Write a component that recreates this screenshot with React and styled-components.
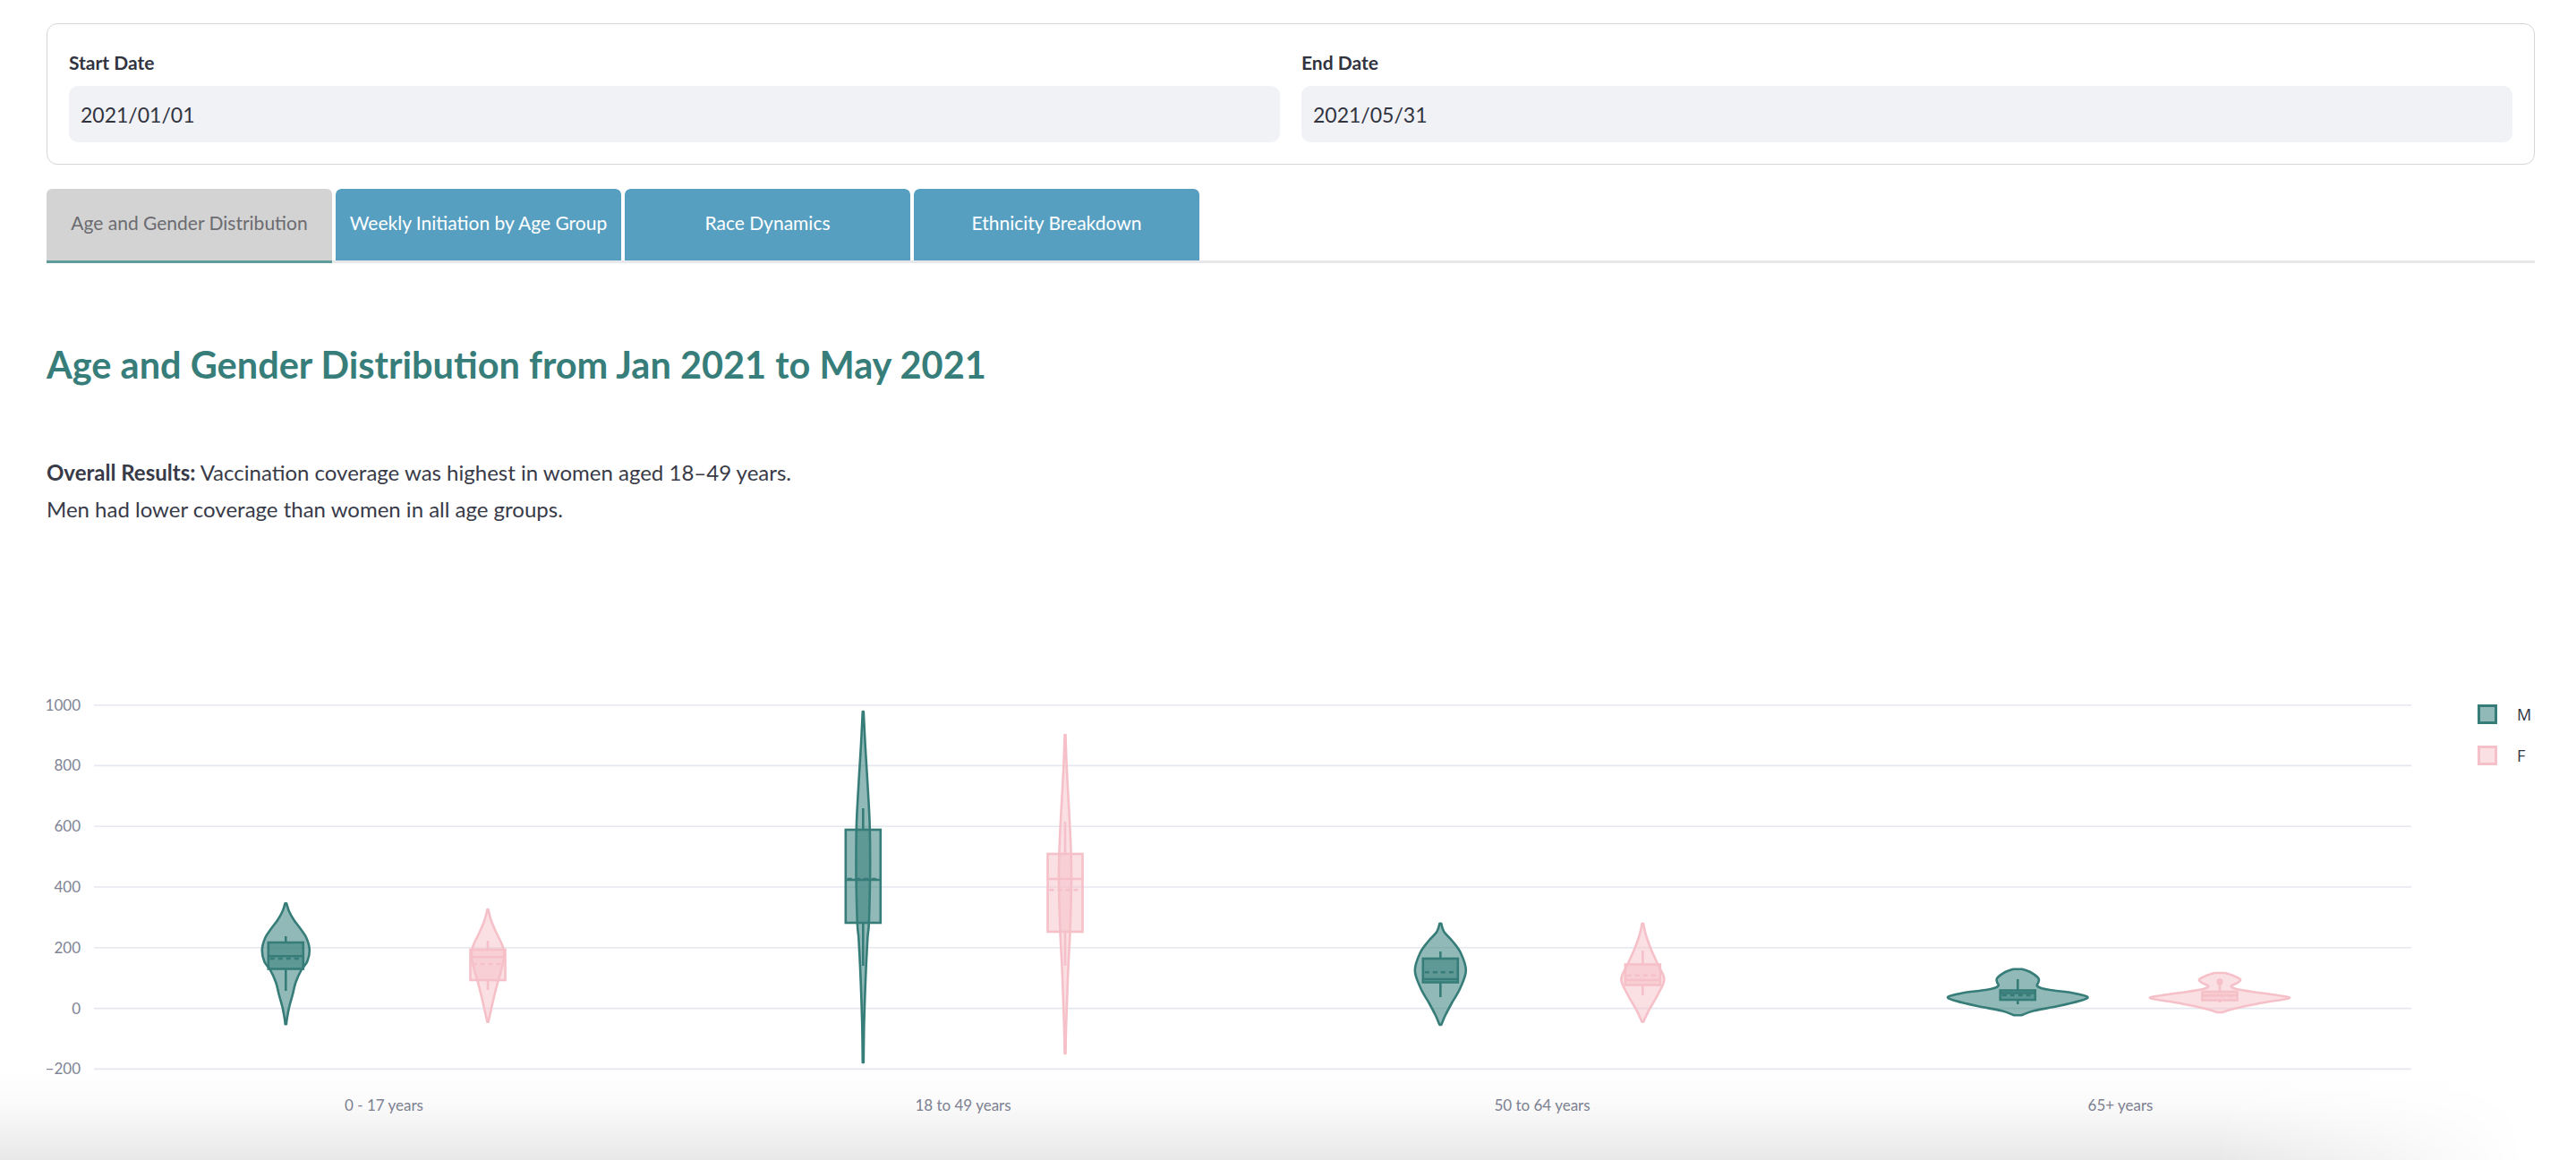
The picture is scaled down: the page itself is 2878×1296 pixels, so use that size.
import React from "react";
import styled, { createGlobalStyle } from "styled-components";

const GlobalStyle = createGlobalStyle`
  html, body { margin: 0; padding: 0; background: #ffffff; overflow: hidden; }
  body { font-family: "Source Sans Pro", Lato, "Noto Sans", sans-serif; color: #31333f; }
  * { box-sizing: border-box; }
`;

const Page = styled.main`
  padding: 26px 46px 0 52px;
`;

const Card = styled.section`
  border: 1px solid #d6d6d9;
  border-radius: 12px;
  padding: 24px;
  display: grid;
  grid-template-columns: 1fr 1fr;
  gap: 24px;
`;

const Field = styled.div`
  display: flex;
  flex-direction: column;
`;

const FieldLabel = styled.label`
  font-size: 21px;
  font-weight: 700;
  line-height: 38px;
  margin-bottom: 7px;
  color: #31333f;
`;

const DateInput = styled.div`
  height: 63px;
  background: #f0f2f6;
  border-radius: 10px;
  padding: 0 13px;
  display: flex;
  align-items: center;
  font-size: 23px;
  color: #31333f;
`;

const TabList = styled.div`
  margin-top: 27px;
  display: flex;
  gap: 4px;
  border-bottom: 3px solid #e8e8ea;
`;

const Tab = styled.button`
  width: 319px;
  height: 83px;
  margin-bottom: -3px;
  border: none;
  border-bottom: 3px solid ${(p) => (p.$active ? "#5f9c99" : "transparent")};
  background-clip: padding-box;
  background-color: ${(p) => (p.$active ? "#d3d3d3" : "#579fc1")};
  color: ${(p) => (p.$active ? "#6b6b70" : "#ffffff")};
  border-radius: 6px 6px 0 0;
  font-family: inherit;
  font-size: 21px;
  font-weight: 400;
  display: flex;
  align-items: center;
  justify-content: center;
  padding: 0 0 5px;
`;

const Title = styled.h3`
  margin: 88px 0 0;
  font-size: 41.5px;
  line-height: 50px;
  font-weight: 700;
  color: #377e7b;
`;

const Summary = styled.p`
  margin: 75px 0 0;
  font-size: 24px;
  line-height: 41px;
  color: #383a48;
`;

const Strong = styled.strong`
  font-weight: 700;
`;

const ChartFrame = styled.div`
  margin-top: 12px;
  width: 2780px;
`;

const ChartSvg = styled.svg`
  display: block;
`;

const BottomFade = styled.div`
  position: fixed;
  left: 0;
  right: 0;
  bottom: 0;
  height: 100px;
  pointer-events: none;
  background: linear-gradient(
    to bottom,
    rgba(0, 0, 0, 0) 0%,
    rgba(0, 0, 0, 0.015) 35%,
    rgba(0, 0, 0, 0.09) 100%
  );
  -webkit-mask-image: linear-gradient(to right, #000 0%, #000 86%, transparent 98%);
  mask-image: linear-gradient(to right, #000 0%, #000 86%, transparent 98%);
`;

const M = { line: "#367c78", fill: "rgba(54,128,124,0.55)" };
const F = { line: "#f5c0c8", fill: "rgba(245,192,200,0.5)" };

const f2 = (n) => n.toFixed(2);

function splineSegments(points) {
  const n = points.length;
  const p = (i) => points[Math.max(0, Math.min(n - 1, i))];
  let d = "";
  for (let i = 0; i < n - 1; i++) {
    const p0 = p(i - 1), p1 = p(i), p2 = p(i + 1), p3 = p(i + 2);
    const c1x = p1[0] + (p2[0] - p0[0]) / 6;
    const c1y = p1[1] + (p2[1] - p0[1]) / 6;
    const c2x = p2[0] - (p3[0] - p1[0]) / 6;
    const c2y = p2[1] - (p3[1] - p1[1]) / 6;
    d += ` C${f2(c1x)},${f2(c1y)} ${f2(c2x)},${f2(c2y)} ${f2(p2[0])},${f2(p2[1])}`;
  }
  return d;
}

function violinPath(cx, pts) {
  const right = pts.map(([y, hw]) => [cx + hw, y]);
  const left = pts.slice().reverse().map(([y, hw]) => [cx - hw, y]);
  const start = right[0];
  const leftStart = left[0];
  return (
    `M${f2(start[0])},${f2(start[1])}` +
    splineSegments(right) +
    ` L${f2(leftStart[0])},${f2(leftStart[1])}` +
    splineSegments(left) +
    " Z"
  );
}

const violins = [
  {
    g: M, cx: 319.3,
    pts: [[1008.3, 0.8], [1016.7, 3.5], [1026.7, 9], [1036.7, 16.5], [1046.7, 23], [1060, 26.5], [1073.3, 24], [1083.3, 17], [1096.7, 11], [1110, 7.7], [1123.3, 4], [1136.7, 1.4], [1143.3, 0.6]],
    box: [1052, 1081.5], med: 1067.3, mean: 1070, wt: 1045, wb: 1106,
  },
  {
    g: F, cx: 545,
    pts: [[1015, 0.6], [1026.7, 3.5], [1040, 9], [1053.3, 15.5], [1061.7, 18], [1072, 17.5], [1085, 14.5], [1096.7, 11], [1116.7, 6], [1130, 3], [1140.7, 0.6]],
    box: [1060, 1094], med: 1068.3, mean: 1076, wt: 1050, wb: 1105,
  },
  {
    g: M, cx: 964.3,
    pts: [[794, 0.5], [830, 2.3], [863, 4.3], [897, 6.3], [925, 7.5], [975, 7.8], [1030, 6.5], [1047, 5], [1080, 3.3], [1113, 2], [1147, 1], [1186, 0.5]],
    box: [926, 1030], med: 982, mean: 981, wt: 902, wb: 1078,
  },
  {
    g: F, cx: 1190,
    pts: [[820, 0.5], [850, 1.5], [880, 3], [916, 5], [950, 6.5], [985, 7], [1040, 5.5], [1080, 3.5], [1120, 2], [1150, 1], [1176, 0.5]],
    box: [953, 1040], med: 981, mean: 993.3, wt: 917, wb: 1078,
  },
  {
    g: M, cx: 1609.3,
    pts: [[1030.7, 0.9], [1040, 4], [1050, 13], [1063.3, 22.5], [1083.3, 28.5], [1103.3, 22], [1120, 12.5], [1133.3, 5.5], [1144, 0.9]],
    box: [1070, 1096.5], med: 1093, mean: 1085.3, wt: 1062, wb: 1113,
  },
  {
    g: F, cx: 1835.3,
    pts: [[1030.7, 0.7], [1043.3, 3.5], [1060, 9.5], [1076.7, 17], [1093, 24], [1110, 17], [1126.7, 7.5], [1140.7, 0.7]],
    box: [1076.5, 1099.5], med: 1094, mean: 1088.7, wt: 1061, wb: 1111,
  },
  {
    g: M, cx: 2254.3,
    pts: [[1081.7, 5], [1085, 14], [1091.7, 23], [1096.7, 23], [1100, 21.5], [1103.3, 27], [1105.5, 40], [1108.5, 62], [1112.7, 78], [1117.3, 69], [1123.3, 44], [1128.3, 18], [1133.3, 4]],
    box: [1105.5, 1116], med: 1108.5, mean: 1111, wt: 1093, wb: 1121,
  },
  {
    g: F, cx: 2480,
    pts: [[1086, 6], [1089, 15], [1093.3, 23], [1097, 20], [1100.5, 13], [1103.5, 17], [1107, 36], [1110.3, 60], [1114, 78], [1118.3, 54], [1123.3, 28], [1127, 12], [1130, 3]],
    box: [1107, 1116.5], med: 1111, mean: 1111.5, wt: 1095, wb: 1119, dot: true,
  },
];

const gridLines = [
  { v: "1000", y: 786.7 },
  { v: "800", y: 854.4 },
  { v: "600", y: 922.2 },
  { v: "400", y: 990 },
  { v: "200", y: 1057.8 },
  { v: "0", y: 1125.6 },
  { v: "\u2212200", y: 1193.4 },
];

const categories = [
  { label: "0 - 17 years", x: 429 },
  { label: "18 to 49 years", x: 1076 },
  { label: "50 to 64 years", x: 1723 },
  { label: "65+ years", x: 2369 },
];

const tickFont = { fontFamily: "'Source Sans Pro', Lato, sans-serif", fontSize: 17, fill: "#808495" };

function Violin({ d }) {
  const { g, cx, pts, box, med, mean, wt, wb, dot } = d;
  const hw = 19.5;
  return (
    <g>
      <path d={violinPath(cx, pts)} fill={g.fill} stroke={g.line} strokeWidth={2.6} strokeLinejoin="round" />
      <rect x={cx - hw} y={box[0]} width={hw * 2} height={box[1] - box[0]} fill={g.fill} stroke={g.line} strokeWidth={2.6} />
      <line x1={cx} x2={cx} y1={wt} y2={box[0]} stroke={g.line} strokeWidth={2.6} />
      <line x1={cx} x2={cx} y1={box[1]} y2={wb} stroke={g.line} strokeWidth={2.6} />
      <line x1={cx - hw} x2={cx + hw} y1={med} y2={med} stroke={g.line} strokeWidth={2.6} />
      <line x1={cx - hw + 2} x2={cx + hw - 2} y1={mean} y2={mean} stroke={g.line} strokeWidth={2.6} strokeDasharray="5 4" />
      {dot && <ellipse cx={cx} cy={wt + 1} rx={3.5} ry={4} fill={g.line} />}
    </g>
  );
}

function ViolinChart() {
  return (
    <ChartSvg width="2780" height="680" viewBox="52 600 2780 680">
      {gridLines.map((l) => (
        <g key={l.v}>
          <line x1={105} x2={2694} y1={l.y} y2={l.y} stroke="#e6e8ef" strokeWidth={1.6} />
          <text x={90} y={l.y + 6} textAnchor="end" {...tickFont}>{l.v}</text>
        </g>
      ))}
      {categories.map((c) => (
        <text key={c.label} x={c.x} y={1240} textAnchor="middle" {...tickFont}>{c.label}</text>
      ))}
      {violins.map((v, i) => (
        <Violin key={i} d={v} />
      ))}
      <g>
        <rect x={2769.5} y={787.5} width={19} height={19} fill={M.fill} stroke={M.line} strokeWidth={3} />
        <text x={2812} y={804} fontFamily="'Open Sans', sans-serif" fontSize={18} fill="#31333f">M</text>
        <rect x={2769.5} y={833.5} width={19} height={19} fill={F.fill} stroke={F.line} strokeWidth={3} />
        <text x={2812} y={850} fontFamily="'Open Sans', sans-serif" fontSize={18} fill="#31333f">F</text>
      </g>
    </ChartSvg>
  );
}

const tabs = ["Age and Gender Distribution", "Weekly Initiation by Age Group", "Race Dynamics", "Ethnicity Breakdown"];

export default function App() {
  return (
    <>
      <GlobalStyle />
      <Page>
        <Card>
          <Field>
            <FieldLabel>Start Date</FieldLabel>
            <DateInput>2021/01/01</DateInput>
          </Field>
          <Field>
            <FieldLabel>End Date</FieldLabel>
            <DateInput>2021/05/31</DateInput>
          </Field>
        </Card>
        <TabList>
          {tabs.map((t, i) => (
            <Tab key={t} $active={i === 0}>{t}</Tab>
          ))}
        </TabList>
        <Title>Age and Gender Distribution from Jan 2021 to May 2021</Title>
        <Summary>
          <Strong>Overall Results:</Strong> Vaccination coverage was highest in women aged 18–49 years.
          <br />
          Men had lower coverage than women in all age groups.
        </Summary>
        <ChartFrame>
          <ViolinChart />
        </ChartFrame>
      </Page>
      <BottomFade />
    </>
  );
}
